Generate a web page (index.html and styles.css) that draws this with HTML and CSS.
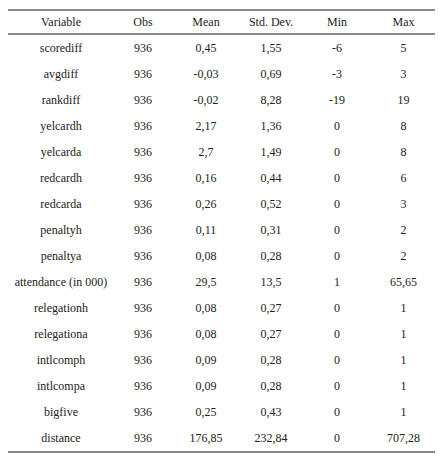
FILE: index.html
```html
<!DOCTYPE html>
<html>
<head>
<meta charset="utf-8">
<link rel="stylesheet" href="styles.css">
</head>
<body>
<div class="wrap">
<table class="stats">
<colgroup>
<col class="c1"><col class="c2"><col class="c3"><col class="c4"><col class="c5"><col class="c6">
</colgroup>
<thead>
<tr><th>Variable</th><th>Obs</th><th>Mean</th><th>Std. Dev.</th><th>Min</th><th>Max</th></tr>
</thead>
<tbody>
<tr><td>scorediff</td><td>936</td><td>0,45</td><td>1,55</td><td>-6</td><td>5</td></tr>
<tr><td>avgdiff</td><td>936</td><td>-0,03</td><td>0,69</td><td>-3</td><td>3</td></tr>
<tr><td>rankdiff</td><td>936</td><td>-0,02</td><td>8,28</td><td>-19</td><td>19</td></tr>
<tr><td>yelcardh</td><td>936</td><td>2,17</td><td>1,36</td><td>0</td><td>8</td></tr>
<tr><td>yelcarda</td><td>936</td><td>2,7</td><td>1,49</td><td>0</td><td>8</td></tr>
<tr><td>redcardh</td><td>936</td><td>0,16</td><td>0,44</td><td>0</td><td>6</td></tr>
<tr><td>redcarda</td><td>936</td><td>0,26</td><td>0,52</td><td>0</td><td>3</td></tr>
<tr><td>penaltyh</td><td>936</td><td>0,11</td><td>0,31</td><td>0</td><td>2</td></tr>
<tr><td>penaltya</td><td>936</td><td>0,08</td><td>0,28</td><td>0</td><td>2</td></tr>
<tr><td>attendance (in 000)</td><td>936</td><td>29,5</td><td>13,5</td><td>1</td><td>65,65</td></tr>
<tr><td>relegationh</td><td>936</td><td>0,08</td><td>0,27</td><td>0</td><td>1</td></tr>
<tr><td>relegationa</td><td>936</td><td>0,08</td><td>0,27</td><td>0</td><td>1</td></tr>
<tr><td>intlcomph</td><td>936</td><td>0,09</td><td>0,28</td><td>0</td><td>1</td></tr>
<tr><td>intlcompa</td><td>936</td><td>0,09</td><td>0,28</td><td>0</td><td>1</td></tr>
<tr><td>bigfive</td><td>936</td><td>0,25</td><td>0,43</td><td>0</td><td>1</td></tr>
<tr><td>distance</td><td>936</td><td>176,85</td><td>232,84</td><td>0</td><td>707,28</td></tr>
</tbody>
</table>
</div>
</body>
</html>
```

FILE: styles.css
```css
html, body {
  margin: 0;
  padding: 0;
  background: #ffffff;
}
.wrap {
  padding: 9px 10px 0 8px;
}
.stats {
  width: 427px;
  border-collapse: collapse;
  table-layout: fixed;
  font-family: "Liberation Serif", "Times New Roman", serif;
  font-size: 12px;
  color: #222222;
  border-top: 2px solid #8a8a8a;
  border-bottom: 2px solid #8a8a8a;
}
.c1 { width: 106px; }
.c2 { width: 58px; }
.c3 { width: 68px; }
.c4 { width: 62px; }
.c5 { width: 70px; }
.c6 { width: 63px; }
.stats th {
  font-weight: normal;
  height: 22px;
  padding: 0;
  text-align: center;
  vertical-align: middle;
  border-bottom: 2px solid #8a8a8a;
}
.stats td {
  height: 26px;
  padding: 0;
  text-align: center;
  vertical-align: middle;
  white-space: nowrap;
}
```
